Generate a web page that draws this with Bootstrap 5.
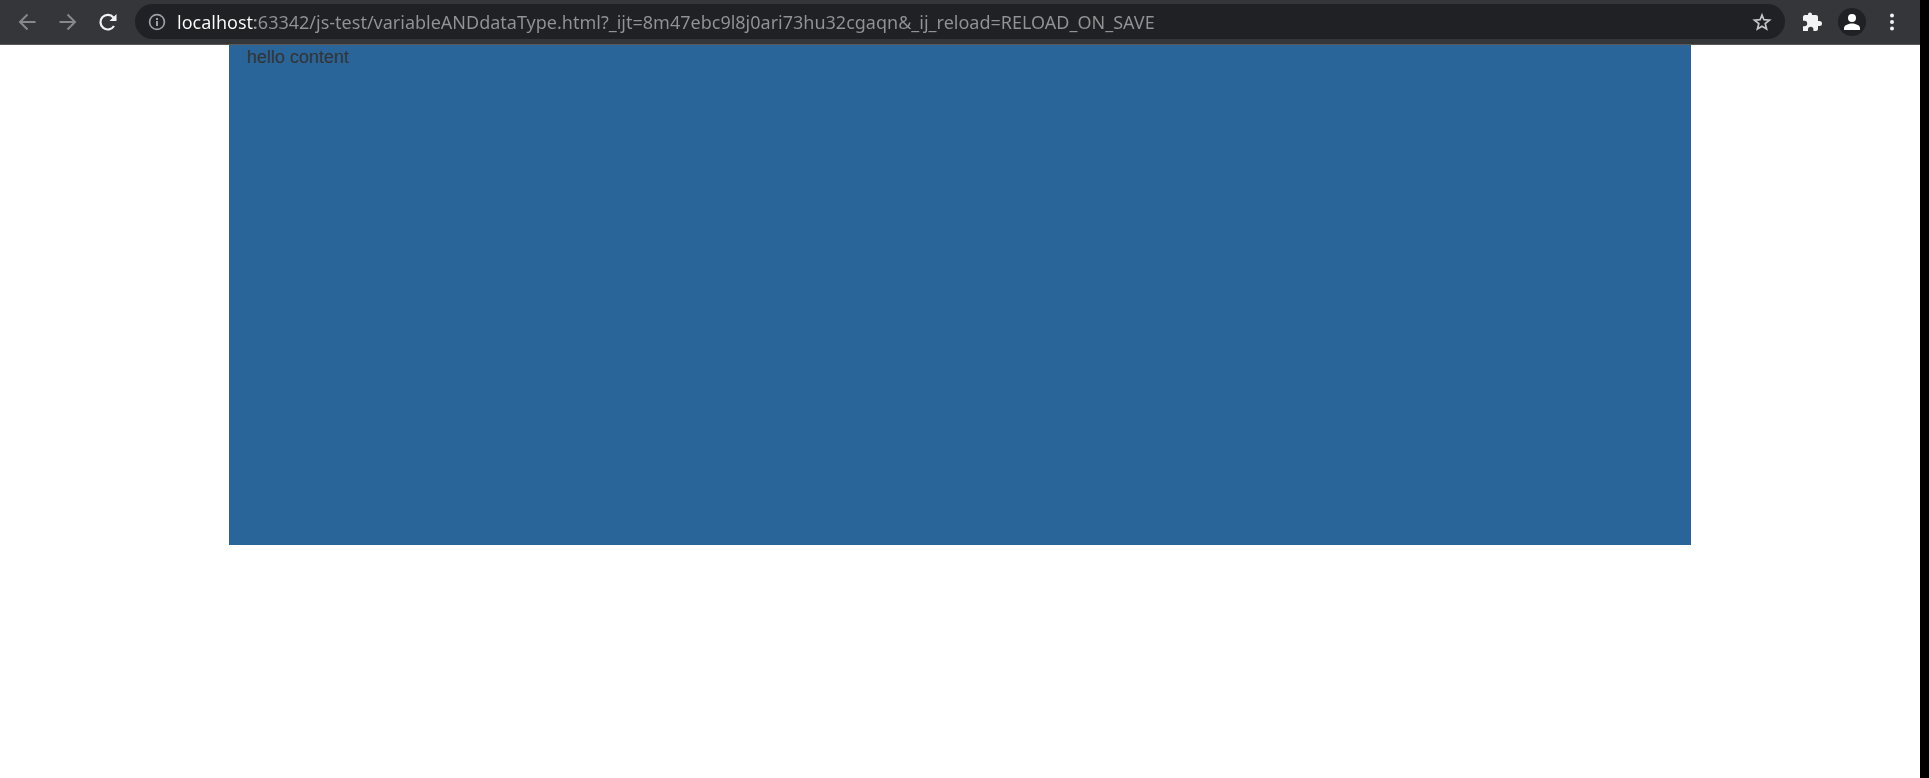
<!DOCTYPE html>
<html lang="en">
<head>
<meta charset="utf-8">
<meta name="viewport" content="width=device-width, initial-scale=1">
<title>variableANDdataType</title>
<link href="https://cdn.jsdelivr.net/npm/bootstrap@5.3.0/dist/css/bootstrap.min.css" rel="stylesheet">
<style>
  body { background: #000; font-family: "Liberation Sans", Arial, sans-serif; }
  .browser { margin-right: 9px; background: #fff; }
  .toolbar { background: #35363a; border-bottom: 1px solid #5c595b; height: 45px; padding: 0 16px 1px 15px; }
  .tool { width: 24px; height: 24px; color: #f1f3f4; }
  .tool:disabled { color: #87888b; opacity: 1; border: 0; }
  .tool svg { display: block; flex: none; }
  .omnibox { background: #202124; height: 35px; margin: 0 15px 0 16px; padding: 0 11px 0 10px; }
  .omnibox .tool { color: #9aa0a6; }
  .omnibox .bookmark { color: #c4c5c7; }
  .address {
    font: 18px/28px "Noto Sans", "Segoe UI", sans-serif;
    color: #919395; min-width: 0;
    background: linear-gradient(90deg, #fff 78px, #919395 78px);
    -webkit-background-clip: text; background-clip: text;
    -webkit-text-fill-color: transparent;
  }
  .actions { gap: 14px; }
  .avatar { width: 28px; height: 28px; background: #202124; color: #fff; }
  .content { max-width: 1462px; min-height: 500px; background: #2a6599; color: #333; font-size: 18px; line-height: 24px; padding: 0 18px; }
</style>
</head>
<body>
<div class="browser min-vh-100">
  <header class="toolbar d-flex align-items-center">
    <div class="d-flex gap-3">
      <button class="tool btn p-0 border-0" type="button" aria-label="Back" disabled>
        <svg width="24" height="24" viewBox="0 0 24 24" fill="none" stroke="currentColor" stroke-width="2"><path d="M20.500 12H5.500M12.500 4.500 5 12l7.500 7.500"/></svg>
      </button>
      <button class="tool btn p-0 border-0" type="button" aria-label="Forward" disabled>
        <svg width="24" height="24" viewBox="0 0 24 24" fill="none" stroke="currentColor" stroke-width="2"><path d="M4.500 12h15M12.500 4.500 20 12l-7.500 7.500"/></svg>
      </button>
      <button class="tool btn p-0 border-0" type="button" aria-label="Reload">
        <svg width="26" height="24" viewBox="0 0 26 24"><path d="M19 16a7.300 7.300 0 1 1-.6-8.500" fill="none" stroke="currentColor" stroke-width="2.200"/><path d="M21.500 4v7h-7z" fill="currentColor"/></svg>
      </button>
    </div>
    <div class="omnibox rounded-pill d-flex align-items-center flex-grow-1">
      <button class="tool btn p-0 border-0 flex-shrink-0 d-flex align-items-center justify-content-center" type="button" aria-label="Site information">
        <svg width="18" height="18" viewBox="0 0 18 18"><circle cx="9" cy="9" r="7.400" fill="none" stroke="currentColor" stroke-width="1.700"/><path d="M8 8h2v5H8zM8 5h2v2H8z" fill="currentColor"/></svg>
      </button>
      <input class="address border-0 p-0 ms-2 flex-grow-1" type="text" aria-label="Address" spellcheck="false" value="localhost:63342/js-test/variableANDdataType.html?_ijt=8m47ebc9l8j0ari73hu32cgaqn&amp;_ij_reload=RELOAD_ON_SAVE">
      <button class="tool bookmark btn p-0 border-0 flex-shrink-0" type="button" aria-label="Bookmark this page">
        <svg width="24" height="24" viewBox="0 0 24 24" fill="none" stroke="currentColor" stroke-width="1.700"><path d="m12 5 1.900 4.700 5.600.4-4.300 3.500 1.400 5.400L12 16.200 7.400 19l1.400-5.400-4.300-3.500 5.600-.4z"/></svg>
      </button>
    </div>
    <div class="actions d-flex align-items-center">
      <button class="tool btn p-0 border-0" type="button" aria-label="Extensions">
        <svg width="24" height="24" viewBox="0 0 24 24" fill="currentColor"><path d="M19.500 11H18V7c0-1.100-.9-2-2-2h-4V4.500a2 2 0 0 0-4 0V5H5c-1.100 0-2 .9-2 2v3.800h1.500a2.700 2.700 0 0 1 0 5.400H3V21h5v-1.500a2.700 2.700 0 0 1 5.400 0V21H16c1.100 0 2-.9 2-2v-3h1.500a2.500 2.500 0 0 0 0-5z"/></svg>
      </button>
      <button class="avatar btn p-0 border-0 rounded-circle" type="button" aria-label="Profile">
        <svg class="d-block" width="28" height="28" viewBox="0 0 28 28" fill="currentColor"><circle cx="14" cy="10" r="4"/><path d="M6 22v-2c0-3 5-4.500 8-4.500s8 1.500 8 4.500v2z"/></svg>
      </button>
      <button class="tool btn p-0 border-0" type="button" aria-label="Menu">
        <svg width="24" height="24" viewBox="0 0 24 24" fill="currentColor"><circle cx="12" cy="5.500" r="2"/><circle cx="12" cy="12" r="2"/><circle cx="12" cy="18.500" r="2"/></svg>
      </button>
    </div>
  </header>
  <main class="content mx-auto">hello content</main>
</div>
<script src="https://cdn.jsdelivr.net/npm/bootstrap@5.3.0/dist/js/bootstrap.bundle.min.js"></script>
</body>
</html>
